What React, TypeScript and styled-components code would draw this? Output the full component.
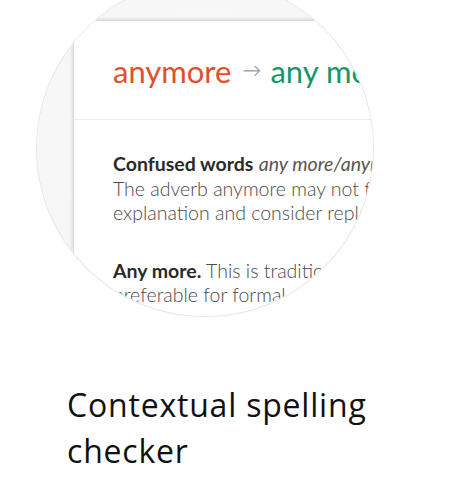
import React from 'react'
import styled, { createGlobalStyle } from 'styled-components'

const GlobalStyle = createGlobalStyle`
  html, body {
    margin: 0;
    padding: 0;
    background: #ffffff;
  }
  body {
    font-family: 'Lato', 'Noto Sans', sans-serif;
  }
`

const Page = styled.div`
  width: 451px;
  height: 484px;
  overflow: hidden;
  display: flex;
  flex-direction: column;
`

const Lens = styled.div`
  width: 336px;
  height: 336px;
  margin: -20px 0 0 37px;
  border-radius: 50%;
  overflow: hidden;
  background: radial-gradient(circle at 50% 45%, #fbfbfb 0%, #f6f6f6 70%, #efefef 100%);
  box-shadow: 0 0 0 1px #e6e6e6, 0 1px 3px rgba(0, 0, 0, 0.06);
  display: flex;
  flex-direction: column;
  flex-shrink: 0;
`

const Card = styled.div`
  margin: 40px -120px 0 37px;
  flex: 1;
  background: #ffffff;
  border-top: 1px solid #d9d9d9;
  box-shadow: -2px -1px 3px rgba(0, 0, 0, 0.12);
  display: flex;
  flex-direction: column;
`

const Header = styled.div`
  height: 99px;
  border-bottom: 1px solid #ececec;
  display: flex;
  align-items: center;
  padding: 2px 0 0 39px;
  white-space: nowrap;
  font-size: 31px;
  box-sizing: border-box;
`

const Word = styled.span<{ $tone: 'wrong' | 'right' }>`
  color: ${(p) => (p.$tone === 'wrong' ? '#e2502a' : '#16976a')};
`

const Arrow = styled.span`
  color: #a3a8ae;
  font-size: 19px;
  margin: 0 9px 0 11px;
  position: relative;
  top: -2px;
`

const Body = styled.div`
  padding: 32px 0 0 39px;
  white-space: nowrap;
  font-size: 19.5px;
  line-height: 24.5px;
  color: #4a4a4a;
  font-weight: 300;
`

const Para = styled.p`
  margin: 0 0 33px 0;
`

const Strong = styled.span`
  font-weight: 700;
  color: #2a2a2a;
`

const Em = styled.em`
  font-weight: 400;
  color: #555555;
`

const Title = styled.h2`
  margin: 66px 0 0 67px;
  font-family: 'Open Sans', 'Noto Sans', sans-serif;
  font-weight: 400;
  font-size: 32px;
  letter-spacing: 0.8px;
  line-height: 46px;
  color: #111111;
  width: 340px;
`

export default function App() {
  return (
    <Page>
      <GlobalStyle />
      <Lens>
        <Card>
          <Header>
            <Word $tone="wrong">anymore</Word>
            <Arrow>→</Arrow>
            <Word $tone="right">any more</Word>
          </Header>
          <Body>
            <Para>
              <Strong>Confused words</Strong> <Em>any more/anymore</Em>
              <br />
              The adverb anymore may not fit the context
              <br />
              explanation and consider replacing it
            </Para>
            <Para>
              <Strong>Any more.</Strong> This is traditionally
              <br />
              preferable for formal writing
            </Para>
          </Body>
        </Card>
      </Lens>
      <Title>Contextual spelling checker</Title>
    </Page>
  )
}
